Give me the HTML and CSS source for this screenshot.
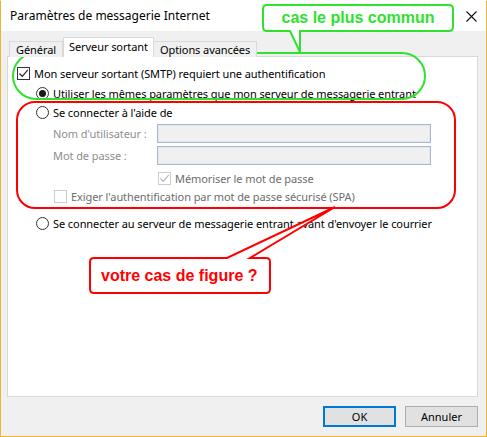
FILE: index.html
```html
<!DOCTYPE html>
<html lang="fr">
<head>
    <meta charset="UTF-8">
    <title>Paramètres de messagerie Internet</title>
    <link rel="stylesheet" href="styles.css">
</head>
<body>
    <div class="window">
        <div class="titlebar">
            <span class="title">Paramètres de messagerie Internet</span>
            <svg class="close" width="11" height="11" viewBox="0 0 11 11">
                <path d="M0.5 0.5 L10.5 10.5 M10.5 0.5 L0.5 10.5" stroke="#111" stroke-width="1.1" fill="none"/>
            </svg>
        </div>
        <div class="content">
            <div class="tabs">
                <div class="tab">Général</div>
                <div class="tab active">Serveur sortant</div>
                <div class="tab">Options avancées</div>
            </div>
            <div class="panel">
                <div class="row r1">
                    <span class="check">
                        <svg width="11" height="11" viewBox="0 0 11 11"><path d="M1.5 5.5 L4.3 8.3 L9.8 1.8" stroke="#222" stroke-width="1.2" fill="none"/></svg>
                    </span>
                    <span>Mon serveur sortant (SMTP) requiert une authentification</span>
                </div>
                <div class="row r2 indent">
                    <span class="radio on"></span>
                    <span>Utiliser les mêmes paramètres que mon serveur de messagerie entrant</span>
                </div>
                <div class="row r3 indent">
                    <span class="radio"></span>
                    <span>Se connecter à l'aide de</span>
                </div>
                <div class="field f1">
                    <span class="label">Nom d'utilisateur :</span>
                    <span class="input"></span>
                </div>
                <div class="field f2">
                    <span class="label">Mot de passe :</span>
                    <span class="input"></span>
                </div>
                <div class="row r6 remember disabled">
                    <span class="check off">
                        <svg width="11" height="11" viewBox="0 0 11 11"><path d="M1.5 5.5 L4.3 8.3 L9.8 1.8" stroke="#b5b5b5" stroke-width="1.2" fill="none"/></svg>
                    </span>
                    <span>Mémoriser le mot de passe</span>
                </div>
                <div class="row r7 spa disabled">
                    <span class="check off"></span>
                    <span>Exiger l'authentification par mot de passe sécurisé (SPA)</span>
                </div>
                <div class="row r8 indent">
                    <span class="radio"></span>
                    <span>Se connecter au serveur de messagerie entrant avant d'envoyer le courrier</span>
                </div>
            </div>
            <div class="footer">
                <button class="btn default">OK</button>
                <button class="btn">Annuler</button>
            </div>
        </div>

        <svg class="notes" width="487" height="437" viewBox="0 0 487 437">
            <rect x="13" y="53" width="412" height="46" rx="23" fill="none" stroke="#2ee22e" stroke-width="2"/>
            <path d="M267 5 H449 Q453 5 453 9 V27 Q453 31 449 31 H300 L300 52 L290 31 H267 Q263 31 263 27 V9 Q263 5 267 5 Z"
                  fill="#fff" stroke="#2ee22e" stroke-width="2"/>
            <text class="note-text green" x="358" y="23" text-anchor="middle">cas le plus commun</text>
            <rect x="17" y="102" width="438" height="106" rx="18" fill="none" stroke="#ff0000" stroke-width="2"/>
            <path d="M94 258 H227 L335 207 L250 258 H266 Q270 258 270 262 V289 Q270 293 266 293 H94 Q90 293 90 289 V262 Q90 258 94 258 Z"
                  fill="#fff" stroke="#ff0000" stroke-width="2"/>
            <text class="note-text red" x="101" y="281">votre cas de figure ?</text>
        </svg>
    </div>
</body>
</html>
```

FILE: styles.css
```css
body {
    margin: 0;
    font-family: "Noto Sans", "Open Sans", sans-serif;
    font-size: 11px;
    letter-spacing: -0.08px;
    color: #000;
}
.window {
    position: relative;
    width: 487px;
    height: 437px;
    box-sizing: border-box;
    border: 1px solid #f2b42c;
    border-top-color: #fff;
    display: flex;
    flex-direction: column;
    background-color: #f0f0f0;
}
.titlebar {
    height: 30px;
    background-color: #fff;
    display: flex;
    align-items: center;
    justify-content: space-between;
    padding: 0 9px 0 9px;
}
.title {
    font-size: 12px;
    letter-spacing: 0;
    margin-top: -1px;
}
.close {
    margin-top: 1px;
}
.content {
    flex: 1;
    padding: 7px 8px 0 6px;
    display: flex;
    flex-direction: column;
}
.tabs {
    display: flex;
    align-items: flex-end;
    height: 19px;
    padding-left: 2px;
    margin-bottom: -1px;
    position: relative;
    z-index: 1;
}
.tab {
    height: 16px;
    line-height: 15px;
    padding: 0 6px;
    border: 1px solid #d9d9d9;
    border-bottom: none;
    background-color: #f0f0f0;
    box-sizing: border-box;
}
.tab + .tab {
    border-left: none;
}
.tab.active {
    height: 20px;
    line-height: 17px;
    padding: 0 5px;
    background-color: #fff;
    border-left: 1px solid #d9d9d9;
}
.panel {
    height: 341px;
    box-sizing: border-box;
    background-color: #fff;
    border: 1px solid #d9d9d9;
    padding: 7px 0 0 9px;
}
.row {
    display: flex;
    align-items: center;
    height: 18px;
    white-space: nowrap;
}
.row .check,
.row .radio {
    margin-right: 4px;
}
.indent {
    padding-left: 19px;
}
.r2 { margin-top: 2px; }
.r3 { margin-top: 1px; }
.r6 { margin-top: 4px; }
.r8 { margin-top: 9px; }
.remember {
    padding-left: 141px;
}
.spa {
    padding-left: 37px;
}
.disabled {
    color: #6d6d6d;
}
.check {
    width: 13px;
    height: 13px;
    box-sizing: border-box;
    border: 1px solid #333;
    background-color: #fff;
    display: flex;
    align-items: center;
    justify-content: center;
    flex-shrink: 0;
}
.check.off {
    border-color: #cccccc;
}
.radio {
    width: 13px;
    height: 13px;
    box-sizing: border-box;
    border: 1px solid #333;
    border-radius: 50%;
    background-color: #fff;
    display: flex;
    align-items: center;
    justify-content: center;
    flex-shrink: 0;
}
.radio.on::after {
    content: "";
    width: 7px;
    height: 7px;
    border-radius: 50%;
    background-color: #1a1a1a;
}
.field {
    display: flex;
    align-items: center;
    height: 19px;
    margin-top: 3px;
    padding-left: 36px;
}
.label {
    width: 104px;
    color: #8e8e8e;
    white-space: nowrap;
}
.input {
    width: 274px;
    height: 19px;
    box-sizing: border-box;
    background-color: #f0f0f0;
    border: 1px solid #a9b9cc;
    box-shadow: inset 0 0 0 1px #e2e8ef;
}
.footer {
    display: flex;
    justify-content: flex-end;
    gap: 9px;
    margin-top: 9px;
}
.btn {
    width: 73px;
    height: 21px;
    box-sizing: border-box;
    font-family: "Noto Sans", "Open Sans", sans-serif;
    font-size: 11px;
    color: #000;
    background-color: #e1e1e1;
    border: 1px solid #adadad;
    padding: 0;
    margin: 0;
}
.btn.default {
    border: 2px solid #0078d7;
}
.notes {
    position: absolute;
    top: -1px;
    left: -1px;
    pointer-events: none;
}
.note-text {
    font-family: "Liberation Sans", Arial, sans-serif;
    font-weight: bold;
    font-size: 16px;
    letter-spacing: 0;
}
.note-text.green {
    fill: #2ee22e;
}
.note-text.red {
    fill: #ff0000;
}
```
